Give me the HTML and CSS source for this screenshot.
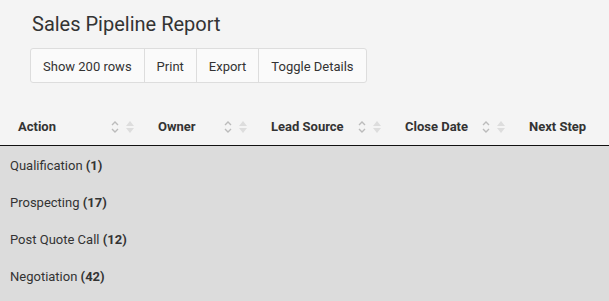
FILE: index.html
```html
<!DOCTYPE html>
<html lang="en">
<head>
  <meta charset="UTF-8" />
  <meta name="viewport" content="width=device-width, initial-scale=1.0" />
  <title>Sales Pipeline Report</title>
  <link rel="stylesheet" href="styles.css">
</head>
<body>
  <div class="report-top">
    <h1>Sales Pipeline Report</h1>
    <div class="btn-group">
      <button>Show 200 rows</button>
      <button>Print</button>
      <button>Export</button>
      <button>Toggle Details</button>
    </div>
  </div>

  <div class="report-wrap">
    <table class="report">
      <colgroup>
        <col style="width: 140px">
        <col style="width: 113px">
        <col style="width: 134px">
        <col style="width: 124px">
        <col>
      </colgroup>
      <thead>
        <tr>
          <th><div class="th-inner"><span>Action</span><span class="sorts"><svg class="s-open" viewBox="0 0 10 16"><path d="M2 6 L5 3 L8 6 M2 10 L5 13 L8 10"/></svg><svg class="s-solid" viewBox="0 0 10 16"><path d="M5 2 L9 7 L1 7 Z M5 14 L9 9 L1 9 Z"/></svg></span></div></th>
          <th><div class="th-inner"><span>Owner</span><span class="sorts"><svg class="s-open" viewBox="0 0 10 16"><path d="M2 6 L5 3 L8 6 M2 10 L5 13 L8 10"/></svg><svg class="s-solid" viewBox="0 0 10 16"><path d="M5 2 L9 7 L1 7 Z M5 14 L9 9 L1 9 Z"/></svg></span></div></th>
          <th><div class="th-inner"><span>Lead Source</span><span class="sorts"><svg class="s-open" viewBox="0 0 10 16"><path d="M2 6 L5 3 L8 6 M2 10 L5 13 L8 10"/></svg><svg class="s-solid" viewBox="0 0 10 16"><path d="M5 2 L9 7 L1 7 Z M5 14 L9 9 L1 9 Z"/></svg></span></div></th>
          <th><div class="th-inner"><span>Close Date</span><span class="sorts"><svg class="s-open" viewBox="0 0 10 16"><path d="M2 6 L5 3 L8 6 M2 10 L5 13 L8 10"/></svg><svg class="s-solid" viewBox="0 0 10 16"><path d="M5 2 L9 7 L1 7 Z M5 14 L9 9 L1 9 Z"/></svg></span></div></th>
          <th><div class="th-inner"><span>Next Step</span></div></th>
        </tr>
      </thead>
      <tbody>
        <tr class="group"><td colspan="5">Qualification <b>(1)</b></td></tr>
        <tr class="group"><td colspan="5">Prospecting <b>(17)</b></td></tr>
        <tr class="group"><td colspan="5">Post Quote Call <b>(12)</b></td></tr>
        <tr class="group"><td colspan="5">Negotiation <b>(42)</b></td></tr>
      </tbody>
    </table>
  </div>
</body>
</html>
```

FILE: styles.css
```css
body {
  margin: 0;
  font-family: Roboto, sans-serif;
  background-color: #f4f4f4;
  color: #333;
  font-size: 13px;
  display: flex;
  flex-direction: column;
  min-height: 100vh;
}

.report-top {
  padding: 12px 30px 0;
}

h1 {
  font-size: 20px;
  font-weight: normal;
  margin: 0 0 12px 2px;
  line-height: 24px;
}

.btn-group {
  display: inline-flex;
  border: 1px solid #ddd;
  border-radius: 3px;
  background: #fafafa;
}

.btn-group button {
  font-family: Roboto, sans-serif;
  font-size: 13px;
  color: #333;
  background: none;
  border: none;
  border-left: 1px solid #ddd;
  height: 33px;
  padding: 1px 12px 0;
  cursor: pointer;
}

.btn-group button:first-child {
  border-left: none;
}

.report-wrap {
  flex: 1;
  margin-top: 23px;
  background: #dcdcdc;
}

.report {
  width: 100%;
  border-collapse: collapse;
  table-layout: fixed;
}

.report th {
  text-align: left;
  font-weight: bold;
  padding: 0;
  height: 39px;
  background: #f4f4f4;
  border-bottom: 1px solid #111;
}

.th-inner {
  display: flex;
  align-items: center;
  justify-content: space-between;
  padding: 2px 5px 0 18px;
}

.sorts {
  display: flex;
  gap: 5px;
}

.sorts svg {
  width: 10px;
  height: 16px;
}

.s-open path {
  fill: none;
  stroke: #bbb;
  stroke-width: 1.4;
}

.s-solid path {
  fill: #ddd;
}

.group td {
  padding: 2px 10px 0;
  height: 35px;
}
```
